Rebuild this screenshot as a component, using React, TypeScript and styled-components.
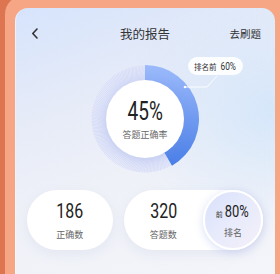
import React from "react";
import styled, { createGlobalStyle } from "styled-components";

const GlobalStyle = createGlobalStyle`
  html, body { margin: 0; padding: 0; }
  body {
    width: 280px;
    height: 274px;
    overflow: hidden;
    background: #dc7550;
    font-family: "Noto Sans CJK SC", "Noto Sans", sans-serif;
  }
`;

const Outer = styled.div`
  height: 274px;
  padding-left: 5px;
  box-sizing: border-box;
`;

const Panel = styled.div`
  height: 278px;
  margin-top: -4px;
  box-sizing: border-box;
  padding: 12px 5px 0 10px;
  background: #f6a685;
  border-top-left-radius: 18px;
`;

const Card = styled.div`
  height: 100%;
  box-sizing: border-box;
  padding: 15px 12px 0 11px;
  border-radius: 13px 13px 0 0;
  border-left: 1px solid rgba(255, 255, 255, 0.45);
  background:
    radial-gradient(ellipse 60% 45% at 100% 38%, rgba(212, 230, 250, 0.95) 0%, rgba(212, 230, 250, 0) 100%),
    linear-gradient(160deg, #d6e4fc 0%, #e6ebf8 32%, #eff1f8 58%, #f4f5fa 100%);
`;

const Header = styled.div`
  height: 20px;
  display: flex;
  align-items: center;
  justify-content: space-between;
  padding: 0 2px 0 4px;
  position: relative;
`;

const Title = styled.div`
  position: absolute;
  left: 0;
  right: 0;
  text-align: center;
  font-size: 12.5px;
  color: #333;
  pointer-events: none;
`;

const Action = styled.div`
  font-size: 10.5px;
  color: #333;
`;

const DonutWrap = styled.div`
  position: relative;
  width: 108px;
  height: 108px;
  margin: 22px auto 0;
  display: flex;
  align-items: center;
  justify-content: center;
`;

const DonutSvg = styled.svg`
  position: absolute;
  inset: 0;
`;

const CenterCircle = styled.div`
  position: relative;
  width: 78px;
  height: 78px;
  border-radius: 50%;
  background: #fff;
  box-shadow: 0 2px 8px rgba(120, 140, 220, 0.22);
  display: flex;
  flex-direction: column;
  align-items: center;
  justify-content: center;
`;

const Num = styled.span<{ $size: number }>`
  display: inline-block;
  font-family: Roboto, "DejaVu Sans", sans-serif;
  font-weight: 400;
  font-size: ${(p) => p.$size}px;
  line-height: 1;
  color: #222;
  transform: scaleX(0.76);
`;

const Label = styled.div`
  font-size: 9px;
  color: #666;
  line-height: 1;
`;

const BigLabel = styled(Label)`
  margin-top: 6px;
`;

const Tip = styled.div`
  position: absolute;
  left: 97px;
  top: -8px;
  height: 18px;
  padding: 0 5px 0 6px;
  display: flex;
  align-items: center;
  gap: 1px;
  border-radius: 9px;
  background: rgba(255, 255, 255, 0.88);
  white-space: nowrap;
`;

const TipText = styled.span`
  font-size: 7.5px;
  color: #333;
`;

const Connector = styled.svg`
  position: absolute;
  left: 90px;
  top: 8px;
`;

const Stats = styled.div`
  display: flex;
  gap: 11px;
  margin-top: 17px;
`;

const Pill = styled.div<{ $w: number }>`
  width: ${(p) => p.$w}px;
  height: 60px;
  border-radius: 30px;
  background: #fff;
  box-shadow: 0 4px 12px rgba(150, 160, 200, 0.14);
  display: flex;
  align-items: center;
`;

const StatBlock = styled.div`
  flex: 1;
  display: flex;
  flex-direction: column;
  align-items: center;
  justify-content: center;
  gap: 8px;
`;

const Badge = styled.div`
  width: 60px;
  height: 60px;
  box-sizing: border-box;
  border-radius: 50%;
  border: 2px solid #fff;
  background: linear-gradient(135deg, #d8e0fb 0%, #e8ebfb 50%, #f3eff9 100%);
  box-shadow: 0 2px 8px rgba(130, 150, 230, 0.3);
  display: flex;
  flex-direction: column;
  align-items: center;
  justify-content: center;
  gap: 8px;
`;

const BadgeTop = styled.div`
  display: flex;
  align-items: baseline;
  margin-left: 2px;
`;

const Small = styled.span`
  font-size: 7px;
  color: #333;
  margin-right: -2px;
`;

const C = 54;
const R = 54;
const R0 = 37;
const ANG = 150;

function pt(r: number, a: number) {
  const rad = (a * Math.PI) / 180;
  return [C + r * Math.sin(rad), C - r * Math.cos(rad)];
}

function Donut() {
  const [xo, yo] = pt(R, ANG);
  const [xi, yi] = pt(R0, ANG);
  const arc = `M ${C} ${C - R} A ${R} ${R} 0 0 1 ${xo} ${yo} L ${xi} ${yi} A ${R0} ${R0} 0 0 0 ${C} ${C - R0} Z`;
  const lines = [];
  for (let i = 0; i < 220; i++) {
    const a = (i * 360) / 220;
    const [x1, y1] = pt(36, a);
    const [x2, y2] = pt(53.5, a + 6);
    lines.push(<line key={i} x1={x1} y1={y1} x2={x2} y2={y2} />);
  }
  return (
    <DonutSvg width="108" height="108" viewBox="0 0 108 108">
      <defs>
        <linearGradient id="blueArc" x1="0" y1="0" x2="0" y2="1">
          <stop offset="0" stopColor="#9cbafb" />
          <stop offset="1" stopColor="#4a7fe7" />
        </linearGradient>
        <radialGradient id="ringFade" cx="0.5" cy="0.5" r="0.5">
          <stop offset="0.65" stopColor="#e0e5fa" stopOpacity="0.95" />
          <stop offset="1" stopColor="#eaedfb" stopOpacity="0.7" />
        </radialGradient>
      </defs>
      <circle cx={C} cy={C} r={53.5} fill="url(#ringFade)" />
      <g stroke="#c6cff3" strokeWidth="0.5" opacity="0.95">
        {lines}
      </g>
      <path d={arc} fill="url(#blueArc)" />
    </DonutSvg>
  );
}

export default function App() {
  return (
    <>
      <GlobalStyle />
      <Outer>
        <Panel>
          <Card>
            <Header>
              <svg width="8" height="11" viewBox="0 0 8 11">
                <path d="M6 1 L1.8 5.5 L6 10" fill="none" stroke="#333" strokeWidth="1.6" strokeLinecap="round" strokeLinejoin="round" />
              </svg>
              <Title>我的报告</Title>
              <Action>去刷题</Action>
            </Header>
            <DonutWrap>
              <Donut />
              <CenterCircle>
                <Num $size={25}>45%</Num>
                <BigLabel>答题正确率</BigLabel>
              </CenterCircle>
              <Connector width="40" height="17" viewBox="0 0 40 17">
                <polyline points="36,3 26,14 4,14" fill="none" stroke="#fff" strokeWidth="0.9" />
                <circle cx="4" cy="14" r="1.3" fill="#fff" />
              </Connector>
              <Tip>
                <TipText>排名前</TipText>
                <Num $size={11} style={{ color: "#333" }}>60%</Num>
              </Tip>
            </DonutWrap>
            <Stats>
              <Pill $w={86}>
                <StatBlock>
                  <Num $size={21}>186</Num>
                  <Label>正确数</Label>
                </StatBlock>
              </Pill>
              <Pill $w={140}>
                <StatBlock>
                  <Num $size={21}>320</Num>
                  <Label>答题数</Label>
                </StatBlock>
                <Badge>
                  <BadgeTop>
                    <Small>前</Small>
                    <Num $size={17}>80%</Num>
                  </BadgeTop>
                  <Label>排名</Label>
                </Badge>
              </Pill>
            </Stats>
          </Card>
        </Panel>
      </Outer>
    </>
  );
}
